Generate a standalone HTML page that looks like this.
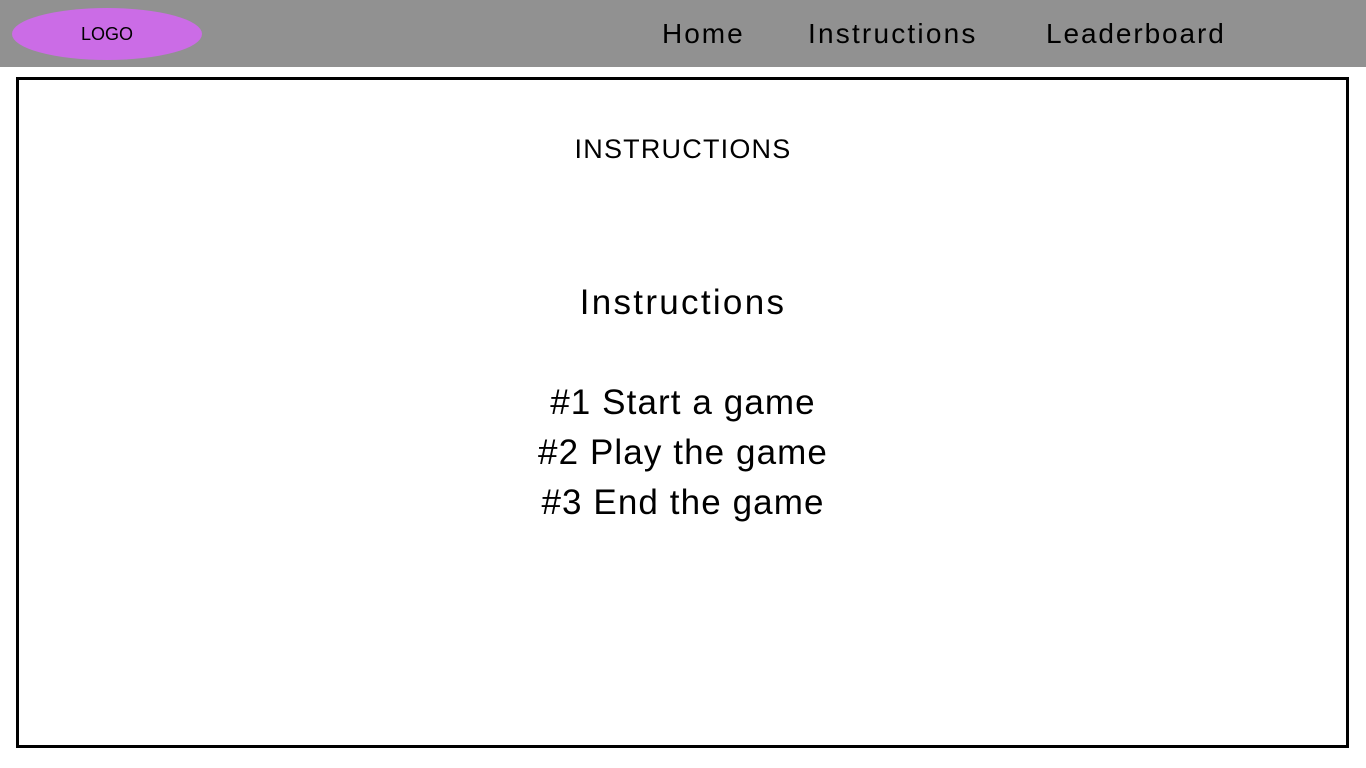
<!DOCTYPE html>
<html><head><style>
body{margin:0;width:1366px;height:768px;background:#fff;position:relative;overflow:hidden;font-family:"Liberation Sans",sans-serif;color:#000}
.hdr{position:absolute;left:0;top:0;width:1366px;height:67px;background:#919191}
.logo{position:absolute;left:12px;top:8px;width:190px;height:52px;border-radius:50%;background:#cb6ce6;font-size:18px;line-height:52px;text-align:center}
.nav{position:absolute;top:18px;font-size:28px;letter-spacing:2px}
.box{position:absolute;left:16px;top:77px;width:1327px;height:665px;border:3px solid #000}
.t{position:absolute;left:0;width:1366px;text-align:center}
</style></head><body>
<div class="hdr"><div class="logo">LOGO</div>
<div class="nav" style="left:662px">Home</div>
<div class="nav" style="left:808px;letter-spacing:2.2px">Instructions</div>
<div class="nav" style="left:1046px;letter-spacing:1.9px">Leaderboard</div></div>
<div class="box"></div>
<div class="t" style="top:134px;font-size:27px;letter-spacing:1.2px">INSTRUCTIONS</div>
<div class="t" style="top:283px;font-size:35px;letter-spacing:2.3px">Instructions</div>
<div class="t" style="top:378px;font-size:35px;line-height:50px;letter-spacing:1.1px">#1 Start a game<br>#2 Play the game<br>#3 End the game</div>
</body></html>
